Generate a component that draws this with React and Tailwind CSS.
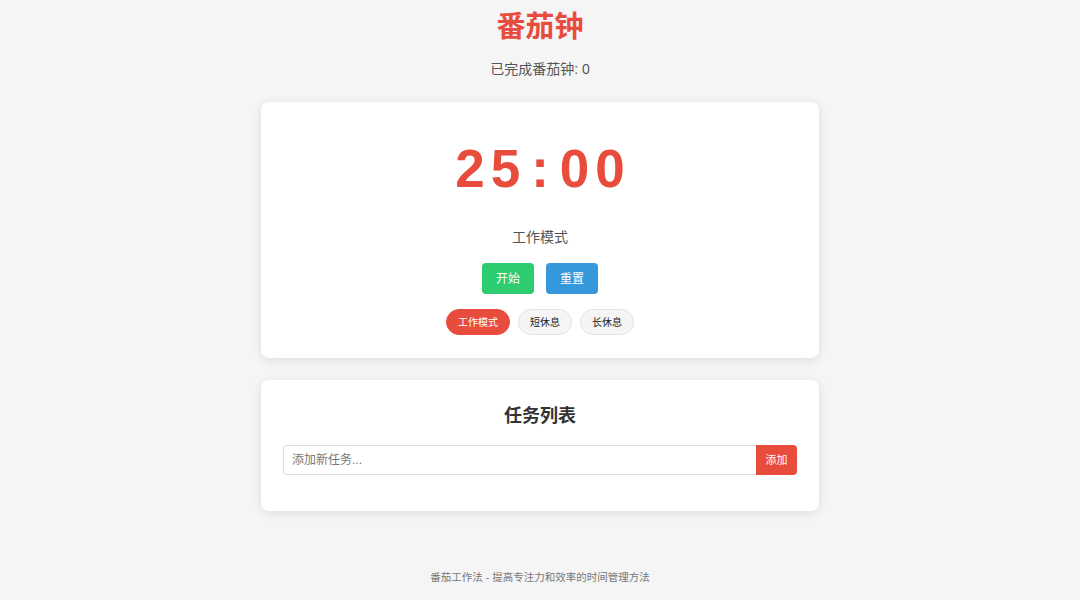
import React, { useState } from "react";

const MODES = [
  { key: "work", label: "工作模式", minutes: 25 },
  { key: "short", label: "短休息", minutes: 5 },
  { key: "long", label: "长休息", minutes: 15 },
];

function App() {
  const [mode, setMode] = useState("work");
  const [completed] = useState(0);
  const [task, setTask] = useState("");
  const [tasks, setTasks] = useState([]);

  const current = MODES.find((m) => m.key === mode);
  const mins = String(current.minutes).padStart(2, "0");

  const addTask = () => {
    if (!task.trim()) return;
    setTasks((prev) => [...prev, task.trim()]);
    setTask("");
  };

  return (
    <div
      className="min-h-[600px] bg-[#f5f5f5] flex flex-col items-center pt-[9px] text-[#333]"
      style={{ fontFamily: '"Liberation Sans", "Noto Sans CJK SC", sans-serif' }}
    >
      <h1 className="text-[29px] leading-[36px] font-bold text-[#e74c3c]">番茄钟</h1>
      <p className="mt-[13px] text-[14px] leading-[22px] text-[#555]">
        已完成番茄钟: {completed}
      </p>

      {/* Timer */}
      <div className="mt-[22px] w-[558px] bg-white rounded-[8px] shadow-[0_2px_10px_rgba(0,0,0,0.1)] flex flex-col items-center pt-[40px] pb-[23px]">
        <div className="text-[53px] leading-none font-bold text-[#e74c3c] tracking-[6px] pl-[6px]">
          <span>{mins}</span>
          <span className="mx-[5px]">:</span>
          <span>00</span>
        </div>
        <div className="mt-[32px] text-[14px] leading-[20px] text-[#555]">{current.label}</div>
        <div className="mt-[16px] flex gap-[12px]">
          <button className="w-[52px] h-[31px] rounded-[4px] bg-[#2ecc71] text-white text-[12px]">
            开始
          </button>
          <button className="w-[52px] h-[31px] rounded-[4px] bg-[#3498db] text-white text-[12px]">
            重置
          </button>
        </div>
        <div className="mt-[15px] flex gap-[8px]">
          {MODES.map((m) => (
            <button
              key={m.key}
              onClick={() => setMode(m.key)}
              className={`h-[26px] px-[11px] rounded-full text-[10px] border ${
                mode === m.key
                  ? "bg-[#e74c3c] border-[#e74c3c] text-white"
                  : "bg-[#f5f5f5] border-[#e3e3e3] text-[#222]"
              }`}
            >
              {m.label}
            </button>
          ))}
        </div>
      </div>

      {/* Tasks */}
      <div className="mt-[22px] w-[558px] bg-white rounded-[8px] shadow-[0_2px_10px_rgba(0,0,0,0.1)] px-[22px] pt-[23px] pb-[36px]">
        <h2 className="text-center text-[18px] leading-[26px] font-bold text-[#333]">任务列表</h2>
        <div className="mt-[16px] flex">
          <input
            value={task}
            onChange={(e) => setTask(e.target.value)}
            onKeyDown={(e) => {
              if (e.key === "Enter") addTask();
            }}
            placeholder="添加新任务..."
            className="flex-1 h-[30px] border border-[#ddd] border-r-0 rounded-l-[4px] px-[8px] text-[12px] outline-none placeholder:text-[#777]"
          />
          <button
            onClick={addTask}
            className="w-[41px] h-[30px] bg-[#e74c3c] text-white text-[11px] rounded-r-[4px]"
          >
            添加
          </button>
        </div>
        {tasks.length > 0 && (
          <ul className="mt-3 space-y-2">
            {tasks.map((t, i) => (
              <li key={i} className="text-[13px] border-b border-[#eee] py-1">
                {t}
              </li>
            ))}
          </ul>
        )}
      </div>

      <footer className="mt-[58px] text-[10.5px] leading-[16px] text-[#777]">
        番茄工作法 - 提高专注力和效率的时间管理方法
      </footer>
    </div>
  );
}

export default App;
